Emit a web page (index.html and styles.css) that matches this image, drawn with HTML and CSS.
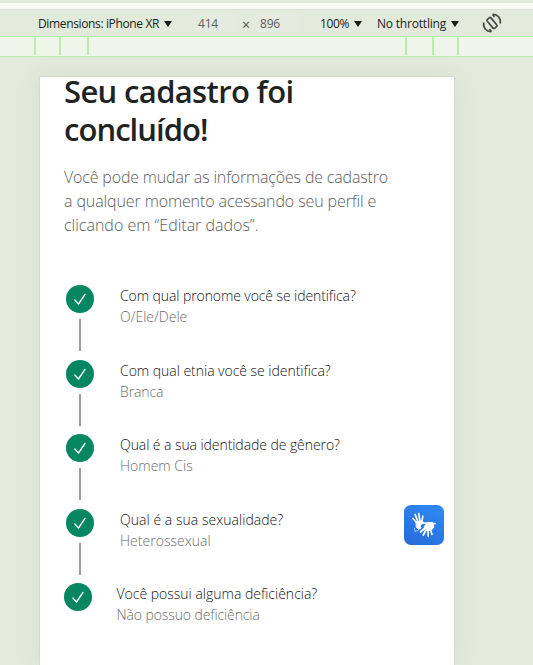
FILE: index.html
```
<!DOCTYPE html>
<html lang="pt-BR">
<head>
<meta charset="utf-8">
<title>Cadastro concluído</title>
<link rel="stylesheet" href="styles.css">
</head>
<body>
<svg class="defs" width="0" height="0"><defs>
<symbol id="check" viewBox="0 0 28 28"><circle cx="14" cy="14" r="14" fill="#048660"/><path d="M8.8 14.9 12.5 19 19 9.4" fill="none" stroke="#fff" stroke-width="1.4" stroke-linecap="round" stroke-linejoin="round"/></symbol>
</defs></svg>
<div class="strip"></div>
<header class="toolbar">
<span class="device"><span class="dim">Dimensions: iPhone XR</span><i class="arrow"></i></span>
<span class="field">414</span><span class="times">×</span><span class="field">896</span>
<span class="scale"><span class="pct">100%</span><i class="arrow"></i></span>
<span class="throttle"><span class="thr">No throttling</span><i class="arrow"></i></span>
<svg class="rotate" viewBox="0 0 20 20" fill="none" stroke="#474b45" stroke-width="1.7"><rect x="7.500" y="4.300" width="5" height="11.400" rx="1.400" transform="rotate(-40 10 10)"/><path d="M10.500 1.500C15.500 1 19 5 18.300 10.500M12.500 4 10.500 1.500M9.500 18.500C4.500 19 1 15 1.700 9.500M7.500 16l2 2.500"/></svg>
</header>
<div class="ruler"><i></i><i></i><i></i><i></i><i></i><i></i></div>
<main class="stage">
<section class="phone">
<h1><span class="h1a">Seu cadastro foi</span><br><span class="h1b">concluído!</span></h1>
<p class="intro"><span class="p1">Você pode mudar as informações de cadastro</span><br><span class="p2">a qualquer momento acessando seu perfil e</span><br><span>clicando em “Editar dados”.</span></p>
<ol class="steps">
<li><span class="mark"><svg><use href="#check"/></svg><i></i></span><div><strong class="q1">Com qual pronome você se identifica?</strong><small>O/Ele/Dele</small></div></li>
<li><span class="mark"><svg><use href="#check"/></svg><i></i></span><div><strong class="q2">Com qual etnia você se identifica?</strong><small class="a2">Branca</small></div></li>
<li><span class="mark"><svg><use href="#check"/></svg><i></i></span><div><strong class="q3">Qual é a sua identidade de gênero?</strong><small>Homem Cis</small></div></li>
<li><span class="mark"><svg><use href="#check"/></svg><i></i></span><div><strong class="q4">Qual é a sua sexualidade?</strong><small class="a4">Heterossexual</small></div></li>
<li class="last"><span class="mark"><svg><use href="#check"/></svg></span><div><strong class="q5">Você possui alguma deficiência?</strong><small class="a5">Não possuo deficiência</small></div></li>
</ol>
</section>
</main>
<div class="libras"><svg viewBox="0 0 40 40" fill="none" stroke="#fff" stroke-linecap="round" stroke-linejoin="round">
<path fill="#fff" stroke-width="1" d="M12.500 17.500 18.500 15.500 19 17.500 16 21l1 2-2.500 1.500-2-2z"/>
<path stroke-width="1.700" d="M13 18 9 13.500M14 17 11.200 9.500M16 16.500 14.700 8.500M18 16.500 18.800 11"/>
<path fill="#fff" stroke-width="1" d="M20.500 21 24 17.500l4.500 0 1.500 4.500-3 3.500-5.500 0z"/>
<path stroke-width="1.700" d="M24 18 18 18.200M28.500 18.700 31 18.700M21 23 16.500 27M22 25 19.300 30M24 25.500 24.200 31.500M26.500 25 28 29.500"/>
<path stroke="#a9ccf8" stroke-width="1" d="M10.500 23.500 11 26.500 14 25.500"/>
</svg></div>
</body>
</html>
```
FILE: styles.css
```
* { box-sizing: border-box; }
body { margin: 0; height: 665px; overflow: hidden; background: #e2eadb; font-family: "Open Sans", sans-serif; color: #202321; }
.defs { position: absolute; }
.strip { height: 9px; border-top: 3px solid #e2ebda; background: #f8fbf2; }
.toolbar { height: 27px; border-top: 1px solid #dce1d7; display: flex; align-items: center; font-size: 12px; padding-left: 38px; white-space: nowrap; }
.device { width: 155px; }
.dim { letter-spacing: -.36px; }
.pct { letter-spacing: -.4px; }
.thr { letter-spacing: -.2px; }
.field { width: 45px; height: 18px; line-height: 19px; padding-left: 5px; border-radius: 3px; background: #e5ebe0; color: #5a5f58; letter-spacing: -.2px; }
.times { width: 17px; padding: 2px 0 0 4px; font-size: 14px; color: #4c5049; }
.scale { width: 57px; margin-left: 20px; }
.throttle { width: 105px; }
.arrow { display: inline-block; border: 4px solid transparent; border-top: 6px solid #171b16; border-bottom: 0; margin-left: 5px; vertical-align: 1px; }
.rotate { width: 20px; height: 20px; }
.ruler { height: 21px; border: 1px solid #b5edaa; background: #eff5ea; border-width: 1px 0; display: grid; grid-template-columns: 25px 28px 318px 27px 25px 2px; padding-left: 34px; }
.ruler i { width: 2px; height: 18px; background: #b8eeaa; }
.stage { padding: 20px 0 0 40px; }
.phone { display: flow-root; width: 414px; height: 588px; background: #fff; padding: 0 24px; box-shadow: 0 0 24px rgba(80,90,80,.08), 0 0 1px #aaa; }
h1 { margin: -5px 0 17px; font-size: 31px; line-height: 38px; font-weight: 550; }
.h1a { letter-spacing: -.65px; }
.h1b { letter-spacing: -.95px; }
.intro { margin: 0; font-size: 16px; line-height: 24px; font-weight: 320; color: #5c5c5c; }
.p1 { letter-spacing: -.167px; }
.p2 { letter-spacing: -.11px; }
.steps { list-style: none; margin: 48px 0 0; padding: 0; }
li { display: flex; height: 74.5px; gap: 26px; padding-left: 2px; }
.last { gap: 24.5px; padding-left: 0; }
.mark svg { width: 28px; height: 28px; display: block; }
.mark i { display: block; width: 2px; height: 32px; margin: 6px auto; background: #999fa3; }
strong, small { display: block; font-size: 14px; line-height: 21px; font-weight: 350; }
strong { color: #141416; }
small { color: #6c6c6c; }
.q1 { letter-spacing: -.09px; }
.q2 { letter-spacing: -.03px; }
.q3 { letter-spacing: -.07px; }
.q4 { letter-spacing: .04px; }
.q5 { letter-spacing: 0; }
.a2 { letter-spacing: -.1px; }
.a4 { letter-spacing: .03px; }
.a5 { letter-spacing: -.1px; }
.libras { position: absolute; left: 404px; top: 505px; width: 40px; height: 40px; border-radius: 7px; background: linear-gradient(30deg, #246bd9, #318af5); }
.libras svg { display: block; width: 40px; height: 40px; }
```
